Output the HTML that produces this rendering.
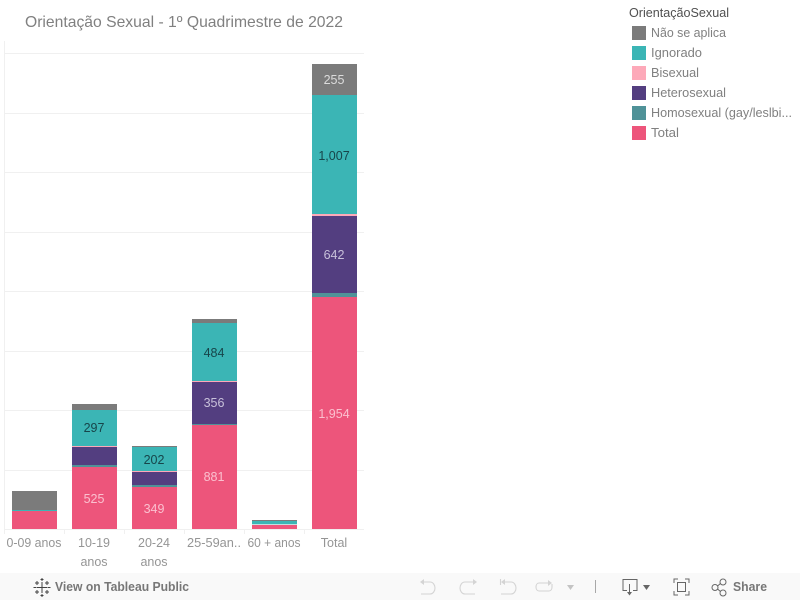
<!DOCTYPE html>
<html><head><meta charset="utf-8"><style>
html,body{margin:0;padding:0;width:800px;height:600px;overflow:hidden;background:#fff}
svg{display:block}
text{font-family:"Liberation Sans",sans-serif}
</style></head><body>
<svg width="800" height="600" viewBox="0 0 800 600" xmlns="http://www.w3.org/2000/svg">
<rect width="800" height="600" fill="#fff"/>
<text x="25" y="27" font-size="16" fill="#808080" textLength="318" lengthAdjust="spacingAndGlyphs">Orientação Sexual - 1º Quadrimestre de 2022</text>
<g fill="#f0f0f0">
<rect x="4" y="41" width="1" height="489"/>
<rect x="5" y="53" width="359" height="1"/><rect x="5" y="113" width="359" height="1"/><rect x="5" y="172" width="359" height="1"/><rect x="5" y="232" width="359" height="1"/><rect x="5" y="291" width="359" height="1"/><rect x="5" y="351" width="359" height="1"/><rect x="5" y="410" width="359" height="1"/><rect x="5" y="470" width="359" height="1"/>
<rect x="4" y="529" width="360" height="1"/>
<rect x="4" y="530" width="1" height="4"/><rect x="64" y="530" width="1" height="4"/><rect x="124" y="530" width="1" height="4"/><rect x="184" y="530" width="1" height="4"/><rect x="244" y="530" width="1" height="4"/><rect x="304" y="530" width="1" height="4"/>
</g>
<!-- 0-09 -->
<rect x="12" y="491" width="45" height="19" fill="#7b7b7b"/><rect x="12" y="510" width="45" height="1" fill="#3bb5b5"/><rect x="12" y="511" width="45" height="18" fill="#ed557b"/>
<!-- 10-19 -->
<rect x="72" y="404" width="45" height="6" fill="#7b7b7b"/><rect x="72" y="410" width="45" height="36" fill="#3bb5b5"/><rect x="72" y="446" width="45" height="1" fill="#fda9b9"/><rect x="72" y="447" width="45" height="18" fill="#533e80"/><rect x="72" y="465" width="45" height="2" fill="#4f9298"/><rect x="72" y="467" width="45" height="62" fill="#ed557b"/>
<!-- 20-24 -->
<rect x="132" y="446" width="45" height="1" fill="#7b7b7b"/><rect x="132" y="447" width="45" height="24" fill="#3bb5b5"/><rect x="132" y="471" width="45" height="1" fill="#fda9b9"/><rect x="132" y="472" width="45" height="13" fill="#533e80"/><rect x="132" y="485" width="45" height="2" fill="#4f9298"/><rect x="132" y="487" width="45" height="42" fill="#ed557b"/>
<!-- 25-59 -->
<rect x="192" y="319" width="45" height="4" fill="#7b7b7b"/><rect x="192" y="323" width="45" height="58" fill="#3bb5b5"/><rect x="192" y="381" width="45" height="1" fill="#fda9b9"/><rect x="192" y="382" width="45" height="42" fill="#533e80"/><rect x="192" y="424" width="45" height="1" fill="#4f9298"/><rect x="192" y="425" width="45" height="104" fill="#ed557b"/>
<!-- 60+ -->
<rect x="252" y="520" width="45" height="1" fill="#7b7b7b"/><rect x="252" y="521" width="45" height="3" fill="#3bb5b5"/><rect x="252" y="524" width="45" height="1" fill="#bfe0e0"/><rect x="252" y="525" width="45" height="4" fill="#ed557b"/>
<!-- Total -->
<rect x="312" y="64" width="45" height="31" fill="#7b7b7b"/><rect x="312" y="95" width="45" height="119" fill="#3bb5b5"/><rect x="312" y="214" width="45" height="2" fill="#fda9b9"/><rect x="312" y="216" width="45" height="77" fill="#533e80"/><rect x="312" y="293" width="45" height="4" fill="#4f9298"/><rect x="312" y="297" width="45" height="232" fill="#ed557b"/>
<!-- value labels -->
<g font-size="12.5" text-anchor="middle">
<text x="334" y="84" fill="#dcdcdc">255</text>
<text x="334" y="160" fill="#17454a">1,007</text>
<text x="334" y="259" fill="#c8c1da">642</text>
<text x="334" y="418" fill="#fbc0cf">1,954</text>
<text x="214" y="357" fill="#17454a">484</text>
<text x="214" y="407" fill="#c8c1da">356</text>
<text x="214" y="481" fill="#fbc0cf">881</text>
<text x="94" y="432" fill="#17454a">297</text>
<text x="94" y="503" fill="#fbc0cf">525</text>
<text x="154" y="464" fill="#17454a">202</text>
<text x="154" y="513" fill="#fbc0cf">349</text>
</g>
<!-- axis labels -->
<g font-size="12.5" fill="#959595" text-anchor="middle">
<text x="34" y="547" textLength="55" lengthAdjust="spacingAndGlyphs">0-09 anos</text>
<text x="94" y="547">10-19</text>
<text x="94" y="566">anos</text>
<text x="154" y="547">20-24</text>
<text x="154" y="566">anos</text>
<text x="214" y="547" textLength="54" lengthAdjust="spacingAndGlyphs">25-59an..</text>
<text x="274" y="547" textLength="53" lengthAdjust="spacingAndGlyphs">60 + anos</text>
<text x="334" y="547">Total</text>
</g>
<!-- legend -->
<text x="629" y="17" font-size="12.5" fill="#505050" textLength="100" lengthAdjust="spacingAndGlyphs">OrientaçãoSexual</text>
<rect x="632" y="26" width="14" height="14" fill="#7b7b7b"/>
<rect x="632" y="46" width="14" height="14" fill="#3bb5b5"/>
<rect x="632" y="66" width="14" height="14" fill="#fda9b9"/>
<rect x="632" y="86" width="14" height="14" fill="#533e80"/>
<rect x="632" y="106" width="14" height="14" fill="#4f9298"/>
<rect x="632" y="126" width="14" height="14" fill="#ed557b"/>
<g font-size="12.5" fill="#808080">
<text x="651" y="37" textLength="75" lengthAdjust="spacingAndGlyphs">Não se aplica</text>
<text x="651" y="57" textLength="51" lengthAdjust="spacingAndGlyphs">Ignorado</text>
<text x="651" y="77" textLength="48" lengthAdjust="spacingAndGlyphs">Bisexual</text>
<text x="651" y="97" textLength="75" lengthAdjust="spacingAndGlyphs">Heterosexual</text>
<text x="651" y="117" textLength="141" lengthAdjust="spacingAndGlyphs">Homosexual (gay/leslbi...</text>
<text x="651" y="137" textLength="28" lengthAdjust="spacingAndGlyphs">Total</text>
</g>
<!-- toolbar -->
<rect x="0" y="573" width="800" height="27" fill="#f9f9f9"/>
<g stroke="#444" stroke-width="1" fill="none">
<path d="M42 582v11M37 587.500h10"/>
<path d="M42 578v3M40.500 579.500h3M42 594v3M40.500 595.500h3M33.500 587.500h3M47.500 587.500h3"/>
<path d="M37 581v4M35 583h4M47 581v4M45 583h4M37 590v4M35 592h4M47 590v4M45 592h4"/>
</g>
<text x="55" y="591" font-size="12.500" font-weight="700" fill="#777" textLength="134" lengthAdjust="spacingAndGlyphs">View on Tableau Public</text>
<g fill="none" stroke="#d4d4d4" stroke-width="1.100">
<path d="M421 582h9c3 0 5 3 5 6s-2 6-5 6h-9"/><path d="M424 579l-4 3 4 3" fill="#d4d4d4" stroke="none"/>
<path d="M476 582h-11c-3 0-5 3-5 6s2 6 5 6h10"/><path d="M473 579l4 3-4 3" fill="#d4d4d4" stroke="none"/>
<path d="M500.500 579v6M502 582h9c3 0 5 3 5 6s-2 6-5 6h-10"/><path d="M505 579l-4 3 4 3" fill="#d4d4d4" stroke="none"/>
<path d="M551 583h-12c-2 0-3 2-3 4s1 4 3 4h10c2 0 3-2 3-4v-3"/><path d="M548 580l4 3-4 3" fill="#d4d4d4" stroke="none"/>
</g>
<path d="M567 585h7l-3.500 5z" fill="#c4c4c4"/>
<rect x="595" y="580" width="1" height="13" fill="#a8a8a8"/>
<g fill="none" stroke="#666" stroke-width="1">
<path d="M627 590.500h-4v-11h14v11h-4"/>
<path d="M629.500 584v9"/>
<path d="M674 583v-4h4M685 579h4v4M689 591v4h-4M678 595h-4v-4"/>
<rect x="677.500" y="582.500" width="8" height="9"/>
<circle cx="715" cy="587.500" r="3"/><circle cx="723" cy="582" r="3"/><circle cx="723" cy="593" r="3"/>
<path d="M717.500 586l3-2.500M717.500 589l3 2.500"/>
</g>
<path d="M627 592h5l-2.500 3.500z" fill="#666"/>
<path d="M643 585h7l-3.500 5z" fill="#666"/>
<text x="733" y="591" font-size="12.500" font-weight="700" fill="#777" textLength="34" lengthAdjust="spacingAndGlyphs">Share</text>
</svg>
</body></html>
